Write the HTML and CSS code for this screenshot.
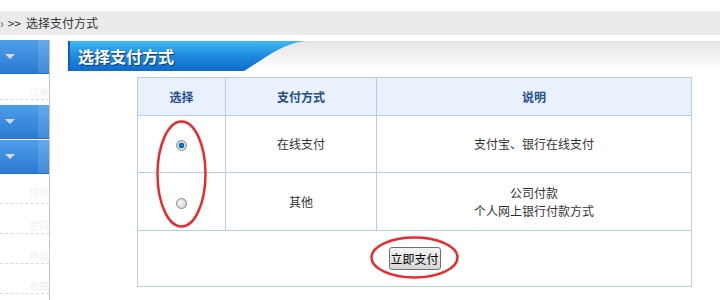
FILE: index.html
```html
<!DOCTYPE html>
<html lang="zh-CN">
<head>
    <meta charset="UTF-8">
    <title>选择支付方式</title>
    <link rel="stylesheet" href="styles.css">
</head>
<body>
<div class="crumb"><span class="crumb-home">›</span><span class="crumb-sep">&gt;&gt;</span>选择支付方式</div>
<div class="frame">
    <aside class="side">
        <div class="side-head"><i class="arrow"></i></div>
        <ul class="side-list">
            <li>订单</li>
        </ul>
        <div class="side-head"><i class="arrow"></i></div>
        <div class="side-head"><i class="arrow"></i></div>
        <ul class="side-list">
            <li>信息</li>
            <li>密码</li>
            <li>地址</li>
            <li>收藏</li>
        </ul>
    </aside>
    <main class="main">
        <h2 class="title-bar"><span class="title">选择支付方式</span></h2>
        <table class="pay">
            <tr class="pay-head">
                <th class="col-pick">选择</th>
                <th class="col-way">支付方式</th>
                <th>说明</th>
            </tr>
            <tr class="row-online">
                <td><span class="radio checked"></span></td>
                <td>在线支付</td>
                <td>支付宝、银行在线支付</td>
            </tr>
            <tr class="row-other">
                <td><span class="radio"></span></td>
                <td>其他</td>
                <td>公司付款<br>个人网上银行付款方式</td>
            </tr>
            <tr class="row-submit">
                <td colspan="3"><button class="pay-btn">立即支付</button></td>
            </tr>
        </table>
    </main>
</div>
<!-- red hand-drawn marks over the page -->
<svg class="marks" width="720" height="300" viewBox="0 0 720 300">
    <ellipse cx="181.5" cy="174" rx="24" ry="52.5" fill="none" stroke="#ec2a2e" stroke-width="2.5"/>
    <ellipse cx="414.5" cy="257.5" rx="43" ry="20" fill="none" stroke="#ec2a2e" stroke-width="2.5"/>
</svg>
</body>
</html>
```

FILE: styles.css
```css
body {
    margin: 0;
    padding-top: 11px;
    font-family: "Noto Sans CJK SC", sans-serif;
    font-size: 12px;
    color: #333;
    background: #fff;
    position: relative;
    overflow: hidden;
    height: 289px;
}
.crumb {
    height: 24px;
    line-height: 24px;
    background: #ebebeb;
    color: #333;
    white-space: nowrap;
}
.crumb-home {
    margin-left: 0;
    color: #555;
}
.crumb-sep {
    margin: 0 5px 0 4px;
}
.frame {
    display: flex;
    margin-top: 5px;
    height: 260px;
}
.side {
    width: 49px;
    flex-shrink: 0;
    border-right: 1px solid #c4c4c4;
}
.side-head {
    height: 33px;
    border-bottom: 1px solid #2a6fc4;
    background:
        linear-gradient(90deg, transparent 38px, rgba(255, 255, 255, 0.12) 38px),
        linear-gradient(#4d9ee8, #2b7ad4);
    display: flex;
    align-items: center;
    margin-bottom: 1px;
}
.arrow {
    width: 0;
    height: 0;
    margin-left: 5px;
    border-left: 5px solid transparent;
    border-right: 5px solid transparent;
    border-top: 5px solid #d6dde6;
}
.side-list {
    list-style: none;
    margin: 0;
    padding: 0;
}
.side-list li {
    height: 24px;
    line-height: 34px;
    margin-bottom: 5px;
    border-bottom: 1px dashed #dadada;
    color: #f1f1f1;
    font-size: 10px;
    text-align: right;
    white-space: nowrap;
    overflow: hidden;
}
.side-head + .side-head + .side-list li:first-child {
    height: 28px;
}
.main {
    flex: 1;
    padding: 1px 0 0 18px;
}
.title-bar {
    margin: 0;
    height: 30px;
    background: linear-gradient(#e4e4e4, #f7f7f7 70%, #fff);
}
.title {
    display: block;
    width: 240px;
    height: 30px;
    line-height: 30px;
    padding-left: 8px;
    box-sizing: border-box;
    font-size: 16px;
    font-weight: bold;
    color: #fff;
    text-shadow: 1px 1px 1px #0a3c7a;
    background: linear-gradient(#3fb8f2, #1b86dc 55%, #0f6ccc);
    border-left: 2px solid #0a5fb8;
    clip-path: path('M0 0 H238 C214 2 196 18 176 30 H0 Z');
}
.pay {
    margin: 6px 0 0 69px;
    width: 555px;
    border-collapse: collapse;
    border: 1px solid #b6cdef;
}
.pay th,
.pay td {
    border: 1px solid #b6cdef;
    text-align: center;
    padding: 0;
    line-height: 18px;
}
.pay-head th {
    height: 37px;
    background: #e9f1fc;
    color: #1f4f8e;
    font-weight: bold;
}
.col-pick {
    width: 87px;
}
.col-way {
    width: 150px;
}
.row-online td {
    height: 56px;
}
.row-other td {
    height: 57px;
}
.row-submit td {
    height: 55px;
}
.radio {
    display: inline-block;
    width: 11px;
    height: 11px;
    border-radius: 50%;
    box-sizing: border-box;
    border: 1px solid #8a8a8a;
    background: radial-gradient(circle at 40% 40%, #fafafa, #d4d4d4 70%);
    vertical-align: middle;
}
.radio.checked {
    background: radial-gradient(circle, #1a86d8 0, #0b5ea8 2.5px, #e6e6e6 3.2px, #cfcfcf 5px);
}
.pay-btn {
    width: 52px;
    height: 23px;
    padding: 0;
    font-family: "Noto Sans CJK SC", sans-serif;
    font-size: 12px;
    color: #000;
    border: 1px solid #707070;
    border-radius: 3px;
    background: linear-gradient(#f3f3f3, #e6e6e6 50%, #d6d6d6);
}
.marks {
    position: absolute;
    top: 0;
    left: 0;
    pointer-events: none;
}
```
